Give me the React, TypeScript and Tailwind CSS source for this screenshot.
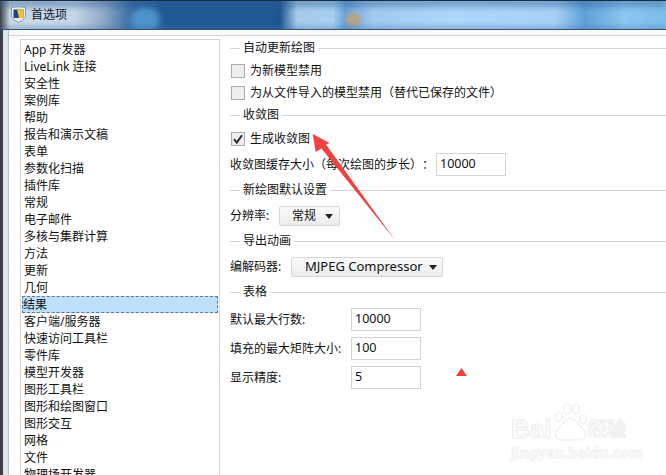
import { ReactNode } from 'react';

const fontStack = "font-['Noto_Sans','Noto_Sans_CJK_SC',sans-serif]";

const sections = [
  'App 开发器',
  'LiveLink 连接',
  '安全性',
  '案例库',
  '帮助',
  '报告和演示文稿',
  '表单',
  '参数化扫描',
  '插件库',
  '常规',
  '电子邮件',
  '多核与集群计算',
  '方法',
  '更新',
  '几何',
  '结果',
  '客户端/服务器',
  '快速访问工具栏',
  '零件库',
  '模型开发器',
  '图形工具栏',
  '图形和绘图窗口',
  '图形交互',
  '网格',
  '文件',
  '物理场开发器',
];

function Heading({ title, className }: { title: string; className: string }) {
  return (
    <div className={`flex h-5 items-center ${className}`}>
      <div className="h-px w-[10px] bg-[#d5d5d5]" />
      <span className="px-[3px]">{title}</span>
      <div className="h-px flex-1 bg-[#d5d5d5]" />
    </div>
  );
}

function CheckRow({ label, checked, className }: { label: string; checked?: boolean; className?: string }) {
  return (
    <div className={`flex h-[22px] items-center gap-[5px] pl-px ${className ?? ''}`}>
      <div className="flex h-[14px] w-[14px] items-center justify-center border border-[#ababab] bg-[#eeeeee]">
        {checked && (
          <svg width="12" height="12" viewBox="0 0 12 12">
            <path d="M2 6.2 L4.8 9.6 L10 2.2" fill="none" stroke="#2b2b2b" strokeWidth="2" />
          </svg>
        )}
      </div>
      <span className="[text-spacing-trim:space-all]">{label}</span>
    </div>
  );
}

function TextBox({ value }: { value: string }) {
  return (
    <div className="flex h-[23px] w-[70px] items-center border border-[#d4d4d4] pb-px pl-[3px] text-[12.5px]">
      {value}
    </div>
  );
}

function Dropdown({ label, className }: { label: string; className: string }) {
  return (
    <div
      className={`flex h-[20px] items-center justify-between rounded-[2px] border border-[#d6d6d6] bg-[linear-gradient(180deg,#fbfbfb,#ececec)] ${className}`}
    >
      {label}
      <svg width="8" height="5" viewBox="0 0 8 5">
        <path d="M0 0 H8 L4 5 Z" fill="#222222" />
      </svg>
    </div>
  );
}

function Row({ children, className }: { children: ReactNode; className: string }) {
  return <div className={`flex items-center ${className}`}>{children}</div>;
}

export default function App() {
  return (
    <div className={`relative h-[475px] w-[666px] overflow-hidden bg-white text-[12px] text-[#111111] ${fontStack}`}>
      {/* title bar, the blurred desktop behind the glass */}
      <div className="relative h-[30px] overflow-hidden border-t border-b border-t-[#1c2b3c] border-b-[#3a4f68] bg-[linear-gradient(90deg,#3a3f46_0,#c9d9e8_10px,#c3d5e6_75px,#8ba6c6_105px,#2d6199_135px,#1f5a94_160px,#1f5a94_270px,#1c5590_280px,#a6cbeb_297px,#a8d0f3_333px,#6aa2d8_345px,#9fc9ee_372px,#acd6fa_450px,#a6d1f7_555px,#5f9fd8_585px,#8bc7f0_625px,#7cbce8_666px)]">
        <div className="absolute top-[6px] left-[130px] h-[26px] w-[30px] rounded-full bg-[#4d93cb] blur-[3px]" />
        <div className="absolute top-[12px] left-[346px] h-[13px] w-[15px] rounded-full bg-[#b9a27f] blur-[2px]" />
        <div className="absolute inset-x-0 -top-px h-[6px] bg-[#2a5f96] opacity-60 blur-[3px]" />
        <div className="absolute inset-x-0 -bottom-px h-[4px] bg-[#3f72ad] opacity-40 blur-[2px]" />
        <div className="relative flex h-full items-center pl-[11px]">
          <svg width="15" height="17" viewBox="0 0 15 17" className="-mt-px">
            <path d="M0.5 1.5 Q7.5 0 14.5 1.5 V11 Q12 15 7.5 16.5 Q3 15 0.5 11 Z" fill="#e6edf2" stroke="#8b9aa8" />
            <rect x="2.5" y="3.5" width="10" height="8.5" fill="#1c3f9c" />
            <path d="M6 3.5 H12.5 V12 H8 Z" fill="#f0c528" />
          </svg>
          <span className="ml-[5px] text-[12px] text-[#0c1a2a]">首选项</span>
        </div>
      </div>

      <div className="flex h-[445px]">
        <div className="w-[3px] bg-[#3d3f42]" />
        <div className="w-[5px] bg-[#dbe7f0]" />
        <div className="flex min-w-0 flex-1 flex-col border-l border-[#b8bfc6]">
          <div className="h-[5px] bg-[#f7f9fb]" />
          <div className="flex min-h-0 flex-1 border-t border-[#d6d6d6] pl-[11px]">
            {/* list of settings pages */}
            <div className="mt-[3px] w-[200px] shrink-0 border border-b-0 border-[#d4d4d4] pt-px pl-px">
              {sections.map((name) => (
                <div
                  key={name}
                  className={
                    name === '结果'
                      ? 'mr-px flex h-[17px] items-center border border-dashed border-[#5a7a94] bg-[#bfe0fb]'
                      : 'flex h-[17px] items-center pl-[2px]'
                  }
                >
                  {name}
                </div>
              ))}
            </div>

            {/* settings of the selected page */}
            <div className="ml-[10px] flex min-w-0 flex-1 flex-col pt-[2px]">
              <Heading title="自动更新绘图" className="" />
              <CheckRow label="为新模型禁用" className="mt-[2px]" />
              <CheckRow label="为从文件导入的模型禁用（替代已保存的文件）" />
              <Heading title="收敛图" className="mt-px" />
              <CheckRow label="生成收敛图" checked className="mt-[3px]" />
              <Row className="mt-[3px]">
                <span className="w-[206px] [text-spacing-trim:space-all]">收敛图缓存大小（每次绘图的步长）：</span>
                <TextBox value="10000" />
              </Row>
              <Heading title="新绘图默认设置" className="mt-[4px]" />
              <Row className="mt-[6px]">
                <span className="w-[49px]">分辨率:</span>
                <Dropdown label="常规" className="w-[61px] pr-[6px] pl-[12px]" />
              </Row>
              <Heading title="导出动画" className="mt-[5px]" />
              <Row className="mt-[6px]">
                <span className="w-[61px]">编解码器:</span>
                <Dropdown label="MJPEG Compressor" className="w-[152px] pr-[5px] pl-[13px] text-[13px]" />
              </Row>
              <Heading title="表格" className="mt-[5px]" />
              <Row className="mt-[6px]">
                <span className="w-[121px]">默认最大行数:</span>
                <TextBox value="10000" />
              </Row>
              <Row className="mt-[6px]">
                <span className="w-[121px]">填充的最大矩阵大小:</span>
                <TextBox value="100" />
              </Row>
              <Row className="mt-[6px]">
                <span className="w-[121px]">显示精度:</span>
                <TextBox value="5" />
              </Row>
            </div>
          </div>
        </div>
      </div>

      {/* annotations drawn over the screenshot */}
      <svg className="absolute top-0 left-0" width="666" height="475" viewBox="0 0 666 475">
        <polygon points="312.7,134 329.5,143 326,144.5 395,240 321.5,148.5 315.7,152" fill="#f0413f" />
        <polygon points="461.5,368 467,376 456,376" fill="#f0413f" />
      </svg>

      {/* watermark */}
      <div className="absolute top-[403px] left-[511px] w-[118px] text-[#fdfdfd]">
        <div className="flex h-[38px] items-end">
          <span className="w-[41px] font-['Liberation_Sans',sans-serif] text-[26px] leading-[24px] font-bold [-webkit-text-stroke:1px_#eeeeee]">
            Bai
          </span>
          <svg width="36" height="38" viewBox="0 0 36 38" className="shrink-0">
            <g fill="none" stroke="#eeeeee" strokeWidth="1.2">
              <ellipse cx="7" cy="14" rx="3.2" ry="4.5" />
              <ellipse cx="15" cy="6" rx="3.5" ry="5" />
              <ellipse cx="24" cy="6" rx="3.5" ry="5" />
              <ellipse cx="31" cy="16" rx="3.2" ry="4.5" />
              <path d="M18 15 C12 15 11 22 6 26 C1 31 4 37 10 37 H27 C33 37 36 31 31 26 C26 22 24 15 18 15 Z" />
            </g>
          </svg>
          <span className="text-[19px] leading-[24px] font-bold [-webkit-text-stroke:1px_#eeeeee]">经验</span>
        </div>
        <div className="mt-[5px] text-[14px] leading-[14px] font-bold tracking-[0.2px] whitespace-nowrap [-webkit-text-stroke:1px_#f1f1f1]">
          jingyan.baidu.com
        </div>
      </div>
    </div>
  );
}
